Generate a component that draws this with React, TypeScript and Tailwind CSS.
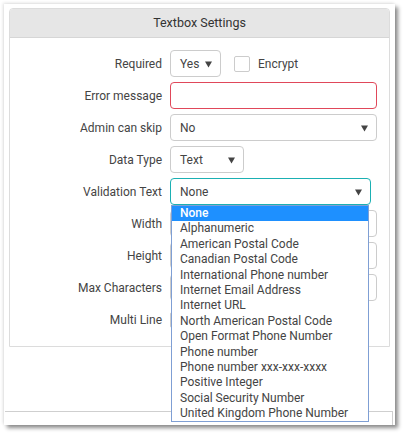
import React from "react";

const options = [
  "None",
  "Alphanumeric",
  "American Postal Code",
  "Canadian Postal Code",
  "International Phone number",
  "Internet Email Address",
  "Internet URL",
  "North American Postal Code",
  "Open Format Phone Number",
  "Phone number",
  "Phone number xxx-xxx-xxxx",
  "Positive Integer",
  "Social Security Number",
  "United Kingdom Phone Number",
];

function Caret() {
  return (
    <svg width="7" height="8" viewBox="0 0 7 8" className="shrink-0">
      <path d="M0 1.5 L7 1.5 L3.5 7.5 Z" fill="#444" />
    </svg>
  );
}

function Select({ value, className }: { value: string; className: string }) {
  return (
    <div
      className={`flex h-[27px] items-center justify-between rounded-[4px] border bg-white pl-[9px] pr-[8px] text-[#444] ${className}`}
    >
      <span>{value}</span>
      <Caret />
    </div>
  );
}

function Row({ label, children }: { label: string; children?: React.ReactNode }) {
  return (
    <div className="flex h-[27px] items-center gap-2">
      <div className="w-[152px] shrink-0 text-right text-[#444]">{label}</div>
      <div className="flex flex-1 items-center">{children}</div>
    </div>
  );
}

export default function App() {
  return (
    <div
      className="h-[435px] w-[405px] bg-white pl-1 pt-1 text-[12px]"
      style={{ fontFamily: "Roboto, 'Liberation Sans', sans-serif" }}
    >
      <div className="relative flex h-[421px] w-[391px] flex-col bg-white shadow-[3px_3px_4px_rgba(0,0,0,0.45),-1px_-1px_3px_rgba(0,0,0,0.12)]">
        {/* Settings panel */}
        <div className="ml-[5px] mt-1 w-[381px] rounded-t-[4px] border border-[#dcdcdc]">
          <div className="flex h-[29px] items-center justify-center rounded-t-[3px] border-b border-[#d6d6d6] bg-[#e6e6e6] text-[12.5px] text-[#333]">
            Textbox Settings
          </div>
          <div className="flex flex-col gap-[5px] pb-[13px] pr-[12px] pt-[12px]">
            <Row label="Required">
              <Select value="Yes" className="w-[51px] border-[#ccc]" />
              <div className="ml-[13px] h-[16px] w-[16px] rounded-[2px] border border-[#ccc]" />
              <span className="ml-2 text-[#444]">Encrypt</span>
            </Row>
            <Row label="Error message">
              <div className="h-[27px] w-full rounded-[4px] border border-[#e0485a]" />
            </Row>
            <Row label="Admin can skip">
              <Select value="No" className="w-full border-[#ccc]" />
            </Row>
            <Row label="Data Type">
              <Select value="Text" className="w-[74px] border-[#ccc]" />
            </Row>
            <Row label="Validation Text">
              <div className="relative w-[201px]">
                <Select value="None" className="w-full border-[#1bb0b3]" />
                <ul className="absolute left-[1px] top-[27px] z-10 w-[198px] border border-[#7f9fd4] bg-white">
                  {options.map((o, i) => (
                    <li
                      key={o}
                      className={`h-[15.4px] pl-[8px] leading-[15.4px] ${
                        i === 0 ? "bg-[#1e90ff] font-medium text-white" : "text-[#444]"
                      }`}
                    >
                      {o}
                    </li>
                  ))}
                </ul>
              </div>
            </Row>
            <Row label="Width">
              <div className="h-[27px] w-full rounded-[4px] border border-[#ccc]" />
            </Row>
            <Row label="Height">
              <div className="h-[27px] w-full rounded-[4px] border border-[#ccc]" />
            </Row>
            <Row label="Max Characters">
              <div className="h-[27px] w-full rounded-[4px] border border-[#ccc]" />
            </Row>
            <Row label="Multi Line">
              <div className="h-[16px] w-[16px] rounded-[2px] border border-[#ccc]" />
            </Row>
          </div>
        </div>

        {/* next section, mostly cut off */}
        <div className="ml-[1px] mt-auto h-[14px] w-[388px] border-r border-t border-[#cfcfcf]" />
      </div>
    </div>
  );
}
